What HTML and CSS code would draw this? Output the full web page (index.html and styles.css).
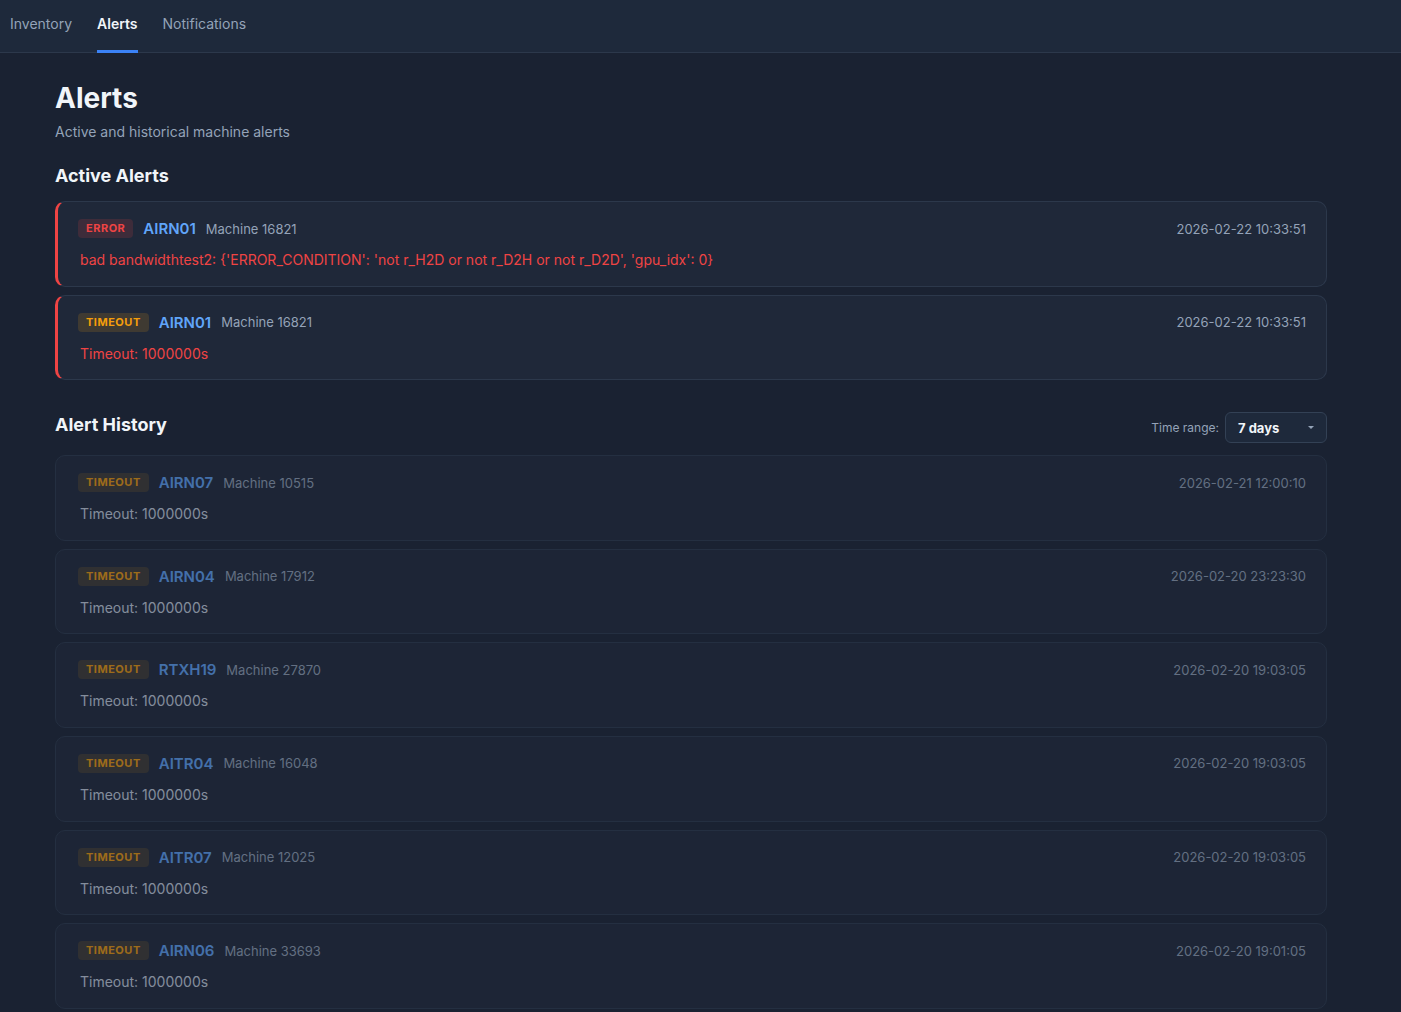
FILE: index.html
```html
<!DOCTYPE html>
<html>
<head>
<meta charset="utf-8">
<link rel="stylesheet" href="styles.css">
</head>
<body>
<nav class="topnav">
  <a class="tab">Inventory</a>
  <a class="tab active">Alerts</a>
  <a class="tab">Notifications</a>
</nav>
<main class="page">
  <h1 class="title">Alerts</h1>
  <p class="subtitle">Active and historical machine alerts</p>

  <h2 class="section-title">Active Alerts</h2>
  <div class="list">
    <div class="card active-card">
      <div class="row">
        <div class="left">
          <span class="badge badge-error">ERROR</span>
          <span class="host">AIRN01</span>
          <span class="machine">Machine 16821</span>
        </div>
        <span class="time">2026-02-22 10:33:51</span>
      </div>
      <div class="msg msg-red">bad bandwidthtest2: {'ERROR_CONDITION': 'not r_H2D or not r_D2H or not r_D2D', 'gpu_idx': 0}</div>
    </div>
    <div class="card active-card">
      <div class="row">
        <div class="left">
          <span class="badge badge-timeout">TIMEOUT</span>
          <span class="host">AIRN01</span>
          <span class="machine">Machine 16821</span>
        </div>
        <span class="time">2026-02-22 10:33:51</span>
      </div>
      <div class="msg msg-red">Timeout: 1000000s</div>
    </div>
  </div>

  <div class="history-head">
    <h2 class="section-title">Alert History</h2>
    <div class="range">
      <span class="range-label">Time range:</span>
      <div class="select"><span>7 days</span><span class="caret"></span></div>
    </div>
  </div>
  <div class="list">
    <div class="card hist">
      <div class="row"><div class="left"><span class="badge badge-timeout">TIMEOUT</span><span class="host">AIRN07</span><span class="machine">Machine 10515</span></div><span class="time">2026-02-21 12:00:10</span></div>
      <div class="msg">Timeout: 1000000s</div>
    </div>
    <div class="card hist">
      <div class="row"><div class="left"><span class="badge badge-timeout">TIMEOUT</span><span class="host">AIRN04</span><span class="machine">Machine 17912</span></div><span class="time">2026-02-20 23:23:30</span></div>
      <div class="msg">Timeout: 1000000s</div>
    </div>
    <div class="card hist">
      <div class="row"><div class="left"><span class="badge badge-timeout">TIMEOUT</span><span class="host">RTXH19</span><span class="machine">Machine 27870</span></div><span class="time">2026-02-20 19:03:05</span></div>
      <div class="msg">Timeout: 1000000s</div>
    </div>
    <div class="card hist">
      <div class="row"><div class="left"><span class="badge badge-timeout">TIMEOUT</span><span class="host">AITR04</span><span class="machine">Machine 16048</span></div><span class="time">2026-02-20 19:03:05</span></div>
      <div class="msg">Timeout: 1000000s</div>
    </div>
    <div class="card hist">
      <div class="row"><div class="left"><span class="badge badge-timeout">TIMEOUT</span><span class="host">AITR07</span><span class="machine">Machine 12025</span></div><span class="time">2026-02-20 19:03:05</span></div>
      <div class="msg">Timeout: 1000000s</div>
    </div>
    <div class="card hist">
      <div class="row"><div class="left"><span class="badge badge-timeout">TIMEOUT</span><span class="host">AIRN06</span><span class="machine">Machine 33693</span></div><span class="time">2026-02-20 19:01:05</span></div>
      <div class="msg">Timeout: 1000000s</div>
    </div>
  </div>
</main>
</body>
</html>
```
FILE: styles.css
```css
* { box-sizing: border-box; }
html, body { margin: 0; padding: 0; }
body {
  background: #1a2232;
  font-family: Inter, "Noto Sans", sans-serif;
  color: #e2e8f0;
}
.topnav {
  display: flex;
  gap: 25px;
  height: 53px;
  padding: 0 10px;
  background: #1e293b;
  border-bottom: 1px solid #2c384b;
}
.tab {
  display: flex;
  align-items: center;
  font-size: 14px;
  color: #94a3b8;
  border-bottom: 3px solid transparent;
  padding-bottom: 4px;
  margin-bottom: -1px;
}
.tab.active {
  color: #f1f5f9;
  font-weight: 600;
  border-bottom-color: #3b82f6;
}
.page {
  padding: 28px 74px 40px 55px;
}
.title {
  margin: 0;
  font-size: 28px;
  font-weight: 700;
  color: #f1f5f9;
  line-height: 34px;
}
.subtitle {
  margin: 8px 0 0;
  font-size: 14px;
  color: #94a3b8;
  line-height: 18px;
}
.section-title {
  margin: 24px 0 14px;
  font-size: 18px;
  font-weight: 700;
  color: #f1f5f9;
  line-height: 22px;
}
.list {
  display: flex;
  flex-direction: column;
  gap: 8px;
}
.card {
  background: #1f2839;
  border: 1px solid #2c384b;
  border-radius: 10px;
  padding: 16px 20px 16px 22px;
  height: 85.6px;
}
.active-card {
  border-left: 3px solid #ef4444;
  padding-left: 20px;
}
.hist { opacity: 0.6; }
.row {
  display: flex;
  justify-content: space-between;
  align-items: center;
  height: 21px;
}
.left {
  display: flex;
  align-items: center;
  gap: 10px;
}
.badge {
  font-size: 11px;
  font-weight: 700;
  letter-spacing: 0.5px;
  padding: 3px 8px;
  border-radius: 4px;
  line-height: 13px;
}
.badge-error { background: rgba(239, 68, 68, 0.15); color: #ef4444; }
.badge-timeout { background: rgba(245, 158, 11, 0.15); color: #f59e0b; }
.host {
  font-size: 15px;
  font-weight: 600;
  color: #60a5fa;
}
.machine {
  font-size: 13px;
  color: #94a3b8;
}
.time {
  font-size: 13px;
  color: #94a3b8;
}
.msg {
  margin-top: 11px;
  padding-left: 2px;
  font-size: 14px;
  color: #cbd5e1;
  line-height: 20px;
}
.msg-red { color: #ef4444; }
.history-head {
  display: flex;
  justify-content: space-between;
  align-items: center;
  margin-top: 32px;
  margin-bottom: 12px;
}
.history-head .section-title { margin: 0 0 5px; }
.range {
  display: flex;
  align-items: center;
  gap: 6px;
}
.range-label {
  font-size: 12px;
  color: #94a3b8;
}
.select {
  display: flex;
  align-items: center;
  justify-content: space-between;
  width: 102px;
  height: 31px;
  padding: 0 12px;
  background: #1e293b;
  border: 1px solid #334155;
  border-radius: 6px;
  font-size: 13px;
  font-weight: 700;
  color: #f1f5f9;
}
.caret {
  width: 0; height: 0;
  border-left: 3px solid transparent;
  border-right: 3px solid transparent;
  border-top: 3px solid #94a3b8;
}
```
